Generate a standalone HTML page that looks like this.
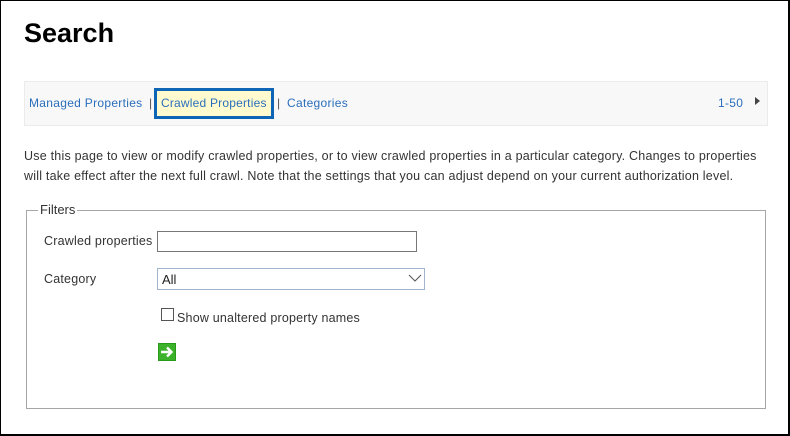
<!DOCTYPE html>
<html><head><style>
*{margin:0;padding:0;box-sizing:border-box}
body{width:790px;height:436px;background:#fff;font-family:"Liberation Sans",sans-serif;position:relative;overflow:hidden}
.frame{position:absolute;left:0;top:0;width:790px;height:436px;border:2px solid #000;border-left-width:1px;border-top-width:1px}
.abs{position:absolute;white-space:nowrap}
h1{position:absolute;left:24px;top:18px;font-size:27px;font-weight:bold;color:#000}
.bar{position:absolute;left:24px;top:81px;width:744px;height:45px;background:#f8f8f8;border:1px solid #ebebeb}
.lnk{color:#2a6ebb;font-size:12px;letter-spacing:0.3px}
.sep{color:#555;font-size:12px}
.sel{position:absolute;left:154px;top:88px;width:120px;height:31px;border:3px solid #0f65b5;background:#fffbcf}
.txt{font-size:12.5px;color:#333;line-height:20px;letter-spacing:0.22px}
.fs{position:absolute;left:26px;top:210px;width:740px;height:199px;border:1px solid #a6a6a6}
.lg{position:absolute;left:38px;top:202px;background:#fff;padding:0 2px;font-size:13px;color:#333}
.lbl{font-size:12.5px;color:#333;letter-spacing:0.2px}
</style></head><body>
<div class="frame"></div>
<h1>Search</h1>
<div class="bar"></div>
<div class="sel"></div>
<div class="abs lnk" style="left:29px;top:96px">Managed Properties</div>
<div class="abs sep" style="left:149px;top:96px">|</div>
<div class="abs lnk" style="left:161px;top:96px;letter-spacing:0.2px">Crawled Properties</div>
<div class="abs sep" style="left:277px;top:96px">|</div>
<div class="abs lnk" style="left:287px;top:96px">Categories</div>
<div class="abs lnk" style="left:718px;top:96px">1-50</div>
<div class="abs" style="left:755px;top:97px;width:0;height:0;border-left:5px solid #444;border-top:4px solid transparent;border-bottom:4px solid transparent"></div>
<div class="abs txt" style="left:24px;top:146px">Use this page to view or modify crawled properties, or to view crawled properties in a particular category. Changes to properties<br>will take effect after the next full crawl. Note that the settings that you can adjust depend on your current authorization level.</div>
<div class="fs"></div>
<div class="lg">Filters</div>
<div class="abs lbl" style="left:44px;top:234px">Crawled properties</div>
<div class="abs" style="left:157px;top:231px;width:260px;height:21px;border:1px solid #777"></div>
<div class="abs lbl" style="left:44px;top:272px">Category</div>
<div class="abs" style="left:157px;top:268px;width:268px;height:22px;border:1px solid #a0b4cc;font-size:13px;padding:3px 4px;color:#222">All</div>
<svg class="abs" style="left:408px;top:273px" width="14" height="10"><path d="M1 2 L7 8 L13 2" fill="none" stroke="#555" stroke-width="1"/></svg>
<div class="abs" style="left:161px;top:308px;width:13px;height:13px;border:1px solid #555"></div>
<div class="abs lbl" style="left:177px;top:311px">Show unaltered property names</div>
<svg class="abs" style="left:158px;top:343px" width="18" height="18"><rect x="0" y="0" width="18" height="18" fill="#2a9a1a"/><rect x="1" y="1" width="16" height="16" fill="#3cb22a"/><path d="M3 9 H13 M9 4.5 L13.5 9 L9 13.5" fill="none" stroke="#fff" stroke-width="2.4"/></svg>
</body></html>
